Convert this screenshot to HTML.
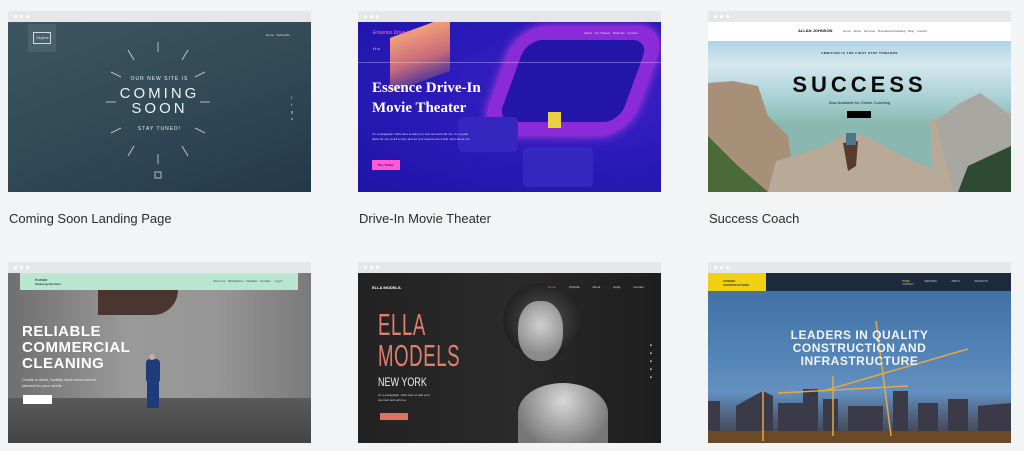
<!DOCTYPE html>
<html><head><meta charset="utf-8"><style>
*{margin:0;padding:0;box-sizing:border-box}
body{width:1024px;height:451px;background:#f3f4f5;font-family:"Liberation Sans",sans-serif;position:relative;overflow:hidden}
.card{position:absolute;width:303px}
.bar{height:11px;background:#e6e7e9;position:relative}
.bar i{position:absolute;top:4px;width:3px;height:3px;border-radius:50%;background:#fff}
.img{height:170px;position:relative;overflow:hidden}
.lbl{position:absolute;font-size:13px;color:#2a2a2a;}
.a{position:absolute}
</style></head><body>

<!-- Card 1 -->
<div class="card" style="left:8px;top:11px">
<div class="bar"><i style="left:6px"></i><i style="left:12px"></i><i style="left:18px"></i></div>
<div class="img" style="background:linear-gradient(160deg,#3d5560 0%,#324a56 50%,#23394a 100%)">
<div class="a" style="left:20px;top:2px;width:28px;height:28px;background:rgba(255,255,255,.08)"></div>
<div class="a" style="left:25px;top:10px;width:18px;height:12px;border:1px solid #cdd;font-size:4px;color:#dde;padding:2px">Skyline</div>
<div class="a" style="left:258px;top:11px;font-size:3px;color:#dde">Home &nbsp; Subscribe</div>
<div class="a" style="left:0;width:303px;top:54px;text-align:center;color:#e8eef0;font-size:5px;letter-spacing:1px">OUR NEW SITE IS</div>
<div class="a" style="left:0;width:303px;top:64px;text-align:center;color:#eef2f3;font-size:15px;letter-spacing:3px;line-height:15px">COMING<br>SOON</div>
<div class="a" style="left:0;width:303px;top:104px;text-align:center;color:#e8eef0;font-size:5px;letter-spacing:1px">STAY TUNED!</div>
<svg class="a" style="left:0;top:0" width="303" height="170" stroke="#cfd8dc" stroke-width="0.8">
<line x1="150" y1="20" x2="150" y2="30"/><line x1="150" y1="132" x2="150" y2="142"/>
<line x1="98" y1="80" x2="108" y2="80"/><line x1="192" y1="80" x2="202" y2="80"/>
<line x1="120" y1="28" x2="126" y2="38"/><line x1="180" y1="28" x2="174" y2="38"/>
<line x1="120" y1="134" x2="126" y2="124"/><line x1="180" y1="134" x2="174" y2="124"/>
<line x1="103" y1="50" x2="113" y2="55"/><line x1="197" y1="50" x2="187" y2="55"/>
<line x1="103" y1="111" x2="113" y2="106"/><line x1="197" y1="111" x2="187" y2="106"/>
<rect x="147" y="150" width="6" height="6" fill="none"/></svg>
<div class="a" style="left:283px;top:72px;font-size:4px;color:#dde;line-height:7px">f<br>t<br>g<br>o</div>
</div></div>
<div class="lbl" style="left:9px;top:211px">Coming Soon Landing Page</div>

<!-- Card 2 -->
<div class="card" style="left:358px;top:11px">
<div class="bar"><i style="left:6px"></i><i style="left:12px"></i><i style="left:18px"></i></div>
<div class="img" style="background:radial-gradient(ellipse at 75% 40%,#3c21c8,#2a1ab8 50%,#1f14a6)">
<div class="a" style="left:32px;top:5px;width:60px;height:55px;background:linear-gradient(#f3a07a,#c66a7a 60%,#5b3a9a);transform:skewY(-20deg)"></div>
<div class="a" style="left:140px;top:4px;width:150px;height:110px;border:14px solid #8a2ad8;border-radius:30px;transform:skewX(-20deg);background:#2416a8;box-shadow:0 0 10px #c040e0"></div>
<div class="a" style="left:190px;top:90px;width:13px;height:16px;background:#e8d040"></div>
<div class="a" style="left:100px;top:95px;width:60px;height:35px;background:#3526c0;border-radius:5px"></div>
<div class="a" style="left:165px;top:125px;width:70px;height:40px;background:#3526c0;border-radius:5px"></div>
<div class="a" style="left:0;top:40px;width:303px;height:1px;background:rgba(255,255,255,.3)"></div>
<div class="a" style="left:15px;top:8px;font-size:5px;color:#ff6ad8;font-style:italic">Essence Drive-In</div>
<div class="a" style="left:226px;top:9px;font-size:3px;color:#dde">About &nbsp; Our Theater &nbsp; Book Me &nbsp; Contact</div>
<div class="a" style="left:15px;top:24px;font-size:4px;color:#fff">f t o</div>
<div class="a" style="left:14px;top:56px;font-family:'Liberation Serif',serif;font-weight:700;font-size:15px;line-height:20px;color:#fff">Essence Drive-In<br>Movie Theater</div>
<div class="a" style="left:14px;top:110px;font-size:3px;color:#dde;line-height:5px;width:100px">I'm a paragraph. Click here to add your own text and edit me. I'm a great place for you to tell a story and let your users know a little more about you.</div>
<div class="a" style="left:14px;top:138px;width:28px;height:10px;background:#ff5ad8;font-size:3px;text-align:center;line-height:10px">Buy Tickets</div>
</div></div>
<div class="lbl" style="left:359px;top:211px">Drive-In Movie Theater</div>

<!-- Card 3 -->
<div class="card" style="left:708px;top:11px">
<div class="bar"><i style="left:6px"></i><i style="left:12px"></i><i style="left:18px"></i></div>
<div class="img" style="background:linear-gradient(#8ec4dc 0%,#d4e8ee 25%,#a8d0d4 45%,#8ab8b0 60%)">
<div class="a" style="left:0;top:0;width:303px;height:19px;background:#fff"></div>
<div class="a" style="left:90px;top:6px;font-size:4px;font-weight:bold;color:#111">ALLAN JOHNSON</div>
<div class="a" style="left:135px;top:7px;font-size:3px;color:#555">Home &nbsp; About &nbsp; Services &nbsp; Motivational Reading &nbsp; Blog &nbsp; Contact</div>
<svg class="a" style="left:0;top:19px" width="303" height="151"><path d="M0 42 L25 40 L50 45 L60 75 L80 95 L88 151 L0 151Z" fill="#a89078"/><path d="M60 151 L68 120 L110 108 L140 92 L160 96 L200 118 L225 128 L222 80 L245 70 L270 58 L290 70 L303 72 L303 151Z" fill="#b9aa98"/><path d="M228 80 L252 62 L272 52 L292 66 L303 78 L303 151 L245 151Z" fill="#a8a7a2"/><path d="M0 95 L30 125 L60 151 L0 151Z" fill="#4a6a3a"/><path d="M260 125 L303 105 L303 151 L250 151Z" fill="#2f4a32"/><path d="M135 102 L150 100 L148 125 L140 130Z" fill="#5a3a2a"/><rect x="138" y="92" width="10" height="12" fill="#4a7888"/></svg>
<div class="a" style="left:0;width:303px;top:29px;text-align:center;font-size:3px;font-weight:bold;color:#222;letter-spacing:.5px">AMBITION IS THE FIRST STEP TOWARDS</div>
<div class="a" style="left:0;width:303px;top:52px;text-align:center;font-size:22px;font-weight:bold;color:#0a0a0a;letter-spacing:4px;line-height:22px">SUCCESS</div>
<div class="a" style="left:0;width:303px;top:78px;text-align:center;font-size:4px;color:#222">Now Available for Online Coaching</div>
<div class="a" style="left:139px;top:89px;width:24px;height:7px;background:#000"></div>
</div></div>
<div class="lbl" style="left:709px;top:211px">Success Coach</div>

<!-- Card 4 -->
<div class="card" style="left:8px;top:262px">
<div class="bar"><i style="left:6px"></i><i style="left:12px"></i><i style="left:18px"></i></div>
<div class="img" style="background:linear-gradient(90deg,#6e6e6e,#9a9a9a 40%,#959595 70%,#7a7a7a)">
<div class="a" style="left:90px;top:17px;width:80px;height:25px;background:#4a3530;border-radius:0 0 40px 0"></div>
<div class="a" style="left:0;top:125px;width:303px;height:45px;background:linear-gradient(#5a5a5a,#444)"></div>
<div class="a" style="left:12px;top:0;width:278px;height:17px;background:#b8e6d0"></div>
<div class="a" style="left:27px;top:5px;font-size:3px;color:#234;font-weight:bold">PLOVER<br>Cleaning Services</div>
<div class="a" style="left:205px;top:6px;font-size:3px;color:#345">About Us &nbsp; Workplaces &nbsp; Facilities &nbsp; Contact &nbsp; &nbsp; Log In</div>
<div class="a" style="left:14px;top:51px;font-size:15px;font-weight:bold;color:#fff;line-height:16px;letter-spacing:.5px">RELIABLE<br>COMMERCIAL<br>CLEANING</div>
<div class="a" style="left:14px;top:104px;font-size:4px;color:#eee;line-height:6px">Create a clean, healthy work environment<br>tailored for your needs</div>
<div class="a" style="left:15px;top:122px;width:29px;height:9px;background:#fff"></div>
<div class="a" style="left:138px;top:86px;width:14px;height:22px;background:#1e3b7a;border-radius:4px 4px 0 0"></div>
<div class="a" style="left:141px;top:81px;width:6px;height:6px;background:#caa;border-radius:50%"></div>
<div class="a" style="left:139px;top:107px;width:12px;height:28px;background:#1e3b7a"></div>
</div></div>

<!-- Card 5 -->
<div class="card" style="left:358px;top:262px">
<div class="bar"><i style="left:6px"></i><i style="left:12px"></i><i style="left:18px"></i></div>
<div class="img" style="background:linear-gradient(90deg,#222 0%,#2a2a2a 50%,#1e1e1e)">
<div class="a" style="left:145px;top:10px;width:80px;height:75px;border-radius:50%;background:radial-gradient(#555,#222 70%)"></div>
<div class="a" style="left:160px;top:28px;width:45px;height:60px;border-radius:45%;background:radial-gradient(circle at 50% 40%,#cfcfcf,#8a8a8a 70%)"></div>
<div class="a" style="left:160px;top:110px;width:90px;height:60px;border-radius:50% 50% 0 0;background:radial-gradient(circle at 50% 30%,#d8d8d8,#777 80%)"></div>
<div class="a" style="left:14px;top:12px;font-size:4px;color:#fff;font-weight:bold">ELLA MODELS.</div>
<div class="a" style="left:190px;top:12px;font-size:3px;color:#ddd;word-spacing:12px"><span style="color:#f07050">Home</span> Portfolio About Apply Contact</div>
<div class="a" style="left:20px;top:36px;font-size:31px;color:#e08070;line-height:31px;transform:scaleX(.6);transform-origin:left;letter-spacing:1px">ELLA<br>MODELS</div>
<div class="a" style="left:20px;top:102px;font-size:12px;color:#eee;transform:scaleX(.75);transform-origin:left">NEW YORK</div>
<div class="a" style="left:20px;top:120px;font-size:3px;color:#ddd;width:55px;line-height:5px">I'm a paragraph. Click here to add your own text and edit me.</div>
<div class="a" style="left:22px;top:140px;width:28px;height:7px;background:#e07060"></div>
<div class="a" style="left:292px;top:68px;font-size:3px;color:#ddd;line-height:8px">■<br>■<br>■<br>■<br>■</div>
</div></div>

<!-- Card 6 -->
<div class="card" style="left:708px;top:262px">
<div class="bar"><i style="left:6px"></i><i style="left:12px"></i><i style="left:18px"></i></div>
<div class="img" style="background:linear-gradient(#3e6c9e 0%,#4e80b4 40%,#6290c0 70%,#50607a 85%,#3a3a40)">
<div class="a" style="left:0;top:0;width:303px;height:18px;background:#1c2a3c"></div>
<div class="a" style="left:0;top:0;width:58px;height:18px;background:#f0d010;font-size:3px;color:#333;padding:6px 0 0 15px;font-weight:bold">SPHERE<br>CONSTRUCTIONS</div>
<div class="a" style="left:194px;top:7px;font-size:2.5px;color:#ccc;word-spacing:14px"><span style="color:#f0d010">HOME</span> SERVICES ABOUT PROJECTS CONTACT</div>
<svg class="a" style="left:0;top:18px" width="303" height="152"><path d="M0 152 L0 110 L12 110 L12 152Z M28 152 L28 115 L40 108 L55 100 L65 105 L65 152Z M70 152 L70 112 L95 112 L95 98 L110 98 L110 152Z M115 152 L115 108 L130 108 L130 152Z M140 152 L140 115 L175 115 L175 152Z M185 152 L185 100 L200 100 L200 152Z M210 152 L210 112 L230 112 L230 152Z M240 152 L240 108 L260 108 L260 152Z M270 152 L270 115 L303 112 L303 152Z" fill="#3a3a48"/><path d="M0 140 L303 140 L303 152 L0 152Z" fill="#6a4a28"/><g stroke="#e8a840" stroke-width="1.5"><line x1="70" y1="102" x2="200" y2="95"/><line x1="115" y1="100" x2="260" y2="58"/><line x1="125" y1="85" x2="125" y2="145"/><line x1="168" y1="30" x2="183" y2="145"/><line x1="55" y1="100" x2="55" y2="150"/></g></svg>
<div class="a" style="left:0;width:303px;top:56px;text-align:center;font-size:12px;font-weight:bold;color:#f2f4f6;line-height:13px;letter-spacing:.5px">LEADERS IN QUALITY<br>CONSTRUCTION AND<br>INFRASTRUCTURE</div>
</div></div>

</body></html>
